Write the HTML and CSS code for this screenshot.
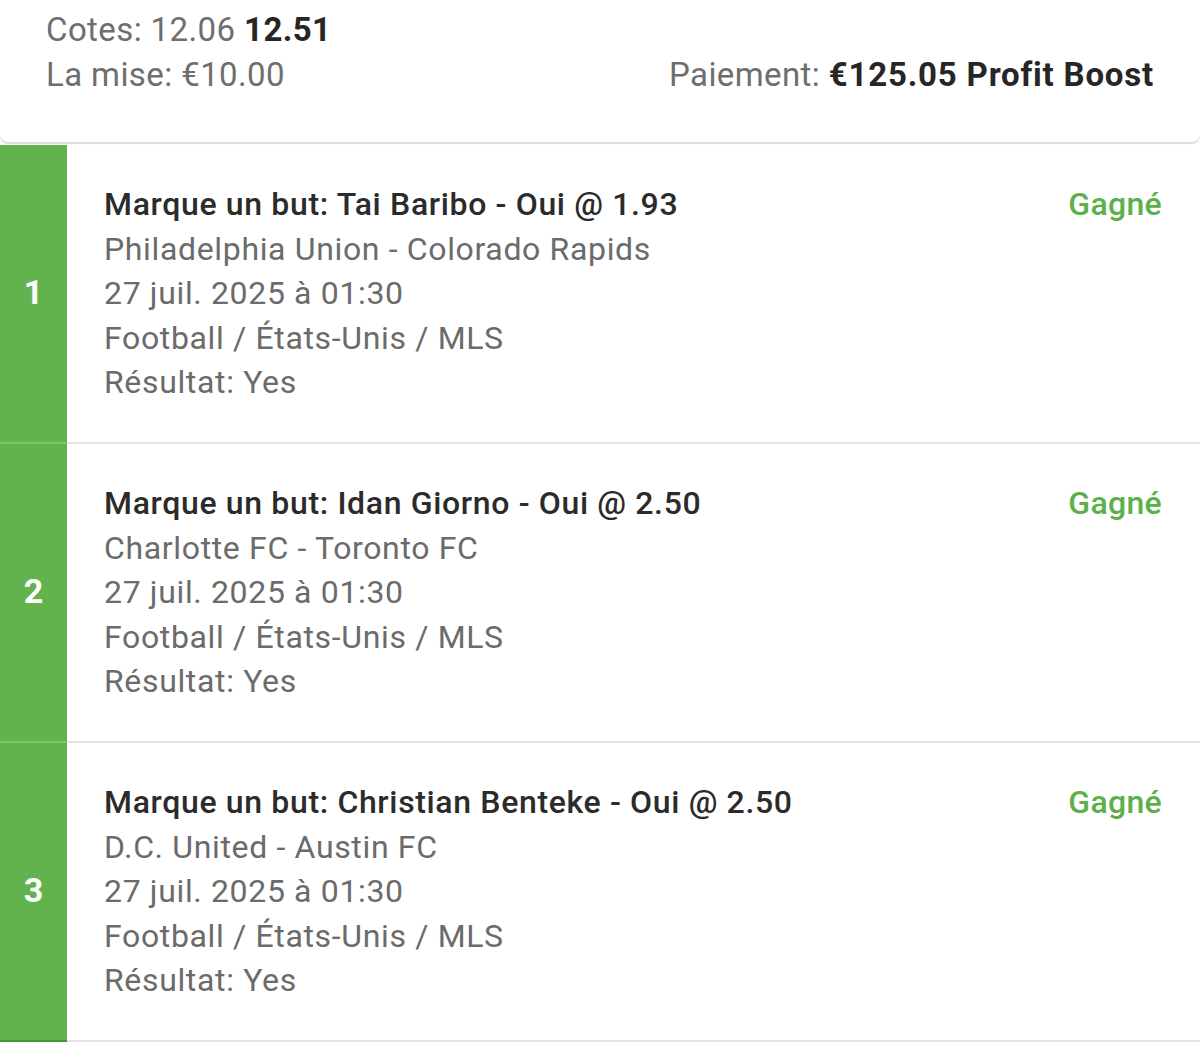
FILE: index.html
```html
<!DOCTYPE html>
<html lang="fr">
<head>
<meta charset="utf-8">
<title>Pari</title>
<link rel="stylesheet" href="styles.css">
</head>
<body>
<div class="summary">
  <div class="sum-line">
    <span class="label">Cotes: 12.06 <b class="strong">12.51</b></span>
  </div>
  <div class="sum-line">
    <span class="label">La mise: €10.00</span>
    <span class="label pay">Paiement: <b class="strong wide">€125.05 Profit Boost</b></span>
  </div>
</div>
<div class="legs">
  <div class="leg">
    <div class="num">1</div>
    <div class="body">
      <div class="info">
        <div class="title">Marque un but: Tai Baribo - Oui @ 1.93</div>
        <div class="line">Philadelphia Union - Colorado Rapids</div>
        <div class="line">27 juil. 2025 à 01:30</div>
        <div class="line">Football / États-Unis / MLS</div>
        <div class="line">Résultat: Yes</div>
      </div>
      <div class="status">Gagné</div>
    </div>
  </div>
  <div class="leg">
    <div class="num">2</div>
    <div class="body">
      <div class="info">
        <div class="title">Marque un but: Idan Giorno - Oui @ 2.50</div>
        <div class="line">Charlotte FC - Toronto FC</div>
        <div class="line">27 juil. 2025 à 01:30</div>
        <div class="line">Football / États-Unis / MLS</div>
        <div class="line">Résultat: Yes</div>
      </div>
      <div class="status">Gagné</div>
    </div>
  </div>
  <div class="leg">
    <div class="num">3</div>
    <div class="body">
      <div class="info">
        <div class="title">Marque un but: Christian Benteke - Oui @ 2.50</div>
        <div class="line">D.C. United - Austin FC</div>
        <div class="line">27 juil. 2025 à 01:30</div>
        <div class="line">Football / États-Unis / MLS</div>
        <div class="line">Résultat: Yes</div>
      </div>
      <div class="status">Gagné</div>
    </div>
  </div>
</div>
</body>
</html>
```
FILE: styles.css
```css
html, body {
  margin: 0;
  padding: 0;
  background: #ffffff;
  font-family: Roboto, "Liberation Sans", sans-serif;
}
.summary {
  background: #ffffff;
  padding: 8px 46px 45px 46px;
  border-radius: 0 0 8px 8px;
  box-shadow: 0 2px 1px #dcdcdc;
  font-size: 33px;
  line-height: 44.5px;
  letter-spacing: 0.4px;
  margin-bottom: 3px;
}
.sum-line {
  display: flex;
  justify-content: space-between;
}
.label {
  color: #6e6e6e;
}
.strong {
  color: #262626;
  font-weight: 700;
}
.wide {
  letter-spacing: 0.8px;
}
.leg {
  display: flex;
  height: 297px;
  border-bottom: 2px solid #e3e3e3;
}
.num {
  width: 67px;
  flex: none;
  background: #62b24e;
  color: #ffffff;
  font-weight: 700;
  font-size: 34px;
  display: flex;
  align-items: center;
  justify-content: center;
  padding-bottom: 4px;
  box-sizing: border-box;
  margin-bottom: -2px;
  border-bottom: 2px solid #7cc46a;
}
.leg:last-child .num {
  border-bottom-color: #3f9a33;
}
.body {
  flex: 1;
  display: flex;
  justify-content: space-between;
  align-items: flex-start;
  padding: 37px 38px 0 37px;
  font-size: 32px;
  line-height: 44.6px;
  letter-spacing: 0.65px;
}
.title {
  color: #2b2b2b;
  font-weight: 500;
}
.line {
  color: #6b6b6b;
}
.status {
  color: #5cb04a;
  font-weight: 500;
  letter-spacing: 0.3px;
}
```
